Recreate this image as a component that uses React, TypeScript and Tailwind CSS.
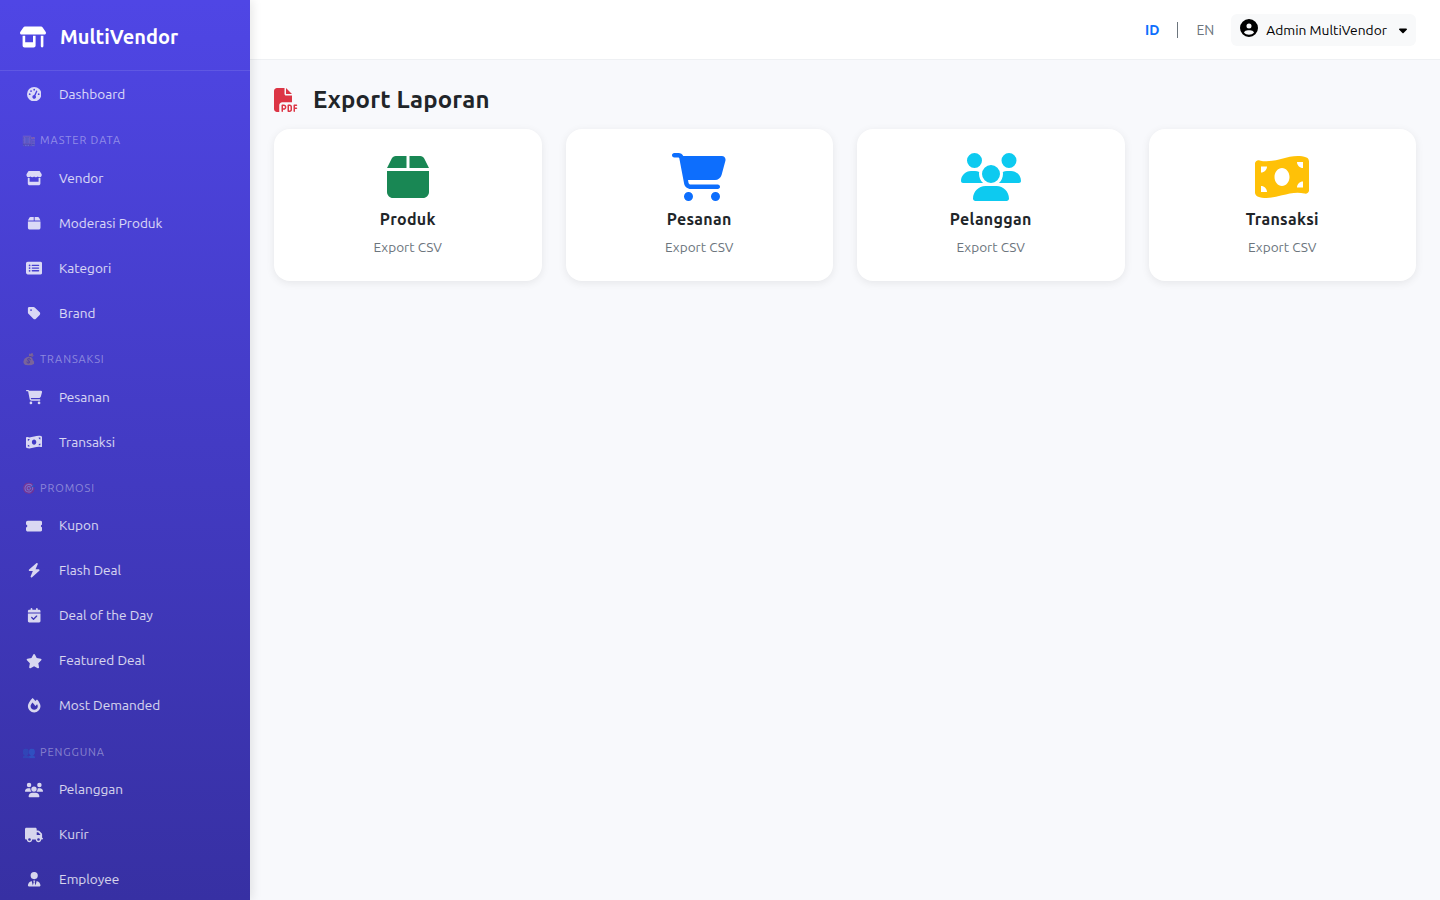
import type { IconType } from "react-icons";
import { FaFireAlt } from "react-icons/fa";
import {
  FaBolt,
  FaBox,
  FaCalendarCheck,
  FaCaretDown,
  FaCartShopping,
  FaCircleUser,
  FaFilePdf,
  FaGaugeHigh,
  FaMoneyBillWave,
  FaRectangleList,
  FaShop,
  FaStar,
  FaStore,
  FaTag,
  FaTicketSimple,
  FaTruck,
  FaUserTie,
  FaUsers,
} from "react-icons/fa6";

type NavItem = { label: string; icon: IconType; size: string };
type NavGroup = { title?: string; emoji?: string; items: NavItem[] };

const groups: NavGroup[] = [
  { items: [{ label: "Dashboard", icon: FaGaugeHigh, size: "text-[14.4px]" }] },
  {
    title: "MASTER DATA",
    emoji: "🏬",
    items: [
      { label: "Vendor", icon: FaStore, size: "text-[16.2px]" },
      { label: "Moderasi Produk", icon: FaBox, size: "text-[14.4px]" },
      { label: "Kategori", icon: FaRectangleList, size: "text-[16.2px]" },
      { label: "Brand", icon: FaTag, size: "text-[14.4px]" },
    ],
  },
  {
    title: "TRANSAKSI",
    emoji: "💰",
    items: [
      { label: "Pesanan", icon: FaCartShopping, size: "text-[16.2px]" },
      { label: "Transaksi", icon: FaMoneyBillWave, size: "text-[16.2px]" },
    ],
  },
  {
    title: "PROMOSI",
    emoji: "🎯",
    items: [
      { label: "Kupon", icon: FaTicketSimple, size: "text-[16.2px]" },
      { label: "Flash Deal", icon: FaBolt, size: "text-[14.4px]" },
      { label: "Deal of the Day", icon: FaCalendarCheck, size: "text-[14.4px]" },
      { label: "Featured Deal", icon: FaStar, size: "text-[16.2px]" },
      { label: "Most Demanded", icon: FaFireAlt, size: "text-[14.4px]" },
    ],
  },
  {
    title: "PENGGUNA",
    emoji: "👥",
    items: [
      { label: "Pelanggan", icon: FaUsers, size: "text-[18px]" },
      { label: "Kurir", icon: FaTruck, size: "text-[18px]" },
      { label: "Employee", icon: FaUserTie, size: "text-[14.4px]" },
    ],
  },
];

const cards = [
  { label: "Produk", icon: FaBox, size: "text-[48px]", color: "text-[#198754]" },
  { label: "Pesanan", icon: FaCartShopping, size: "text-[54px]", color: "text-[#0d6efd]" },
  { label: "Pelanggan", icon: FaUsers, size: "text-[60px]", color: "text-[#0dcaf0]" },
  { label: "Transaksi", icon: FaMoneyBillWave, size: "text-[54px]", color: "text-[#ffc107]" },
];

function Sidebar() {
  return (
    <aside className="relative z-10 flex h-screen w-[250px] shrink-0 flex-col overflow-hidden bg-gradient-to-b from-[#4f46e5] to-[#3730a3] shadow-[2px_0_10px_rgba(0,0,0,0.1)]">
      <div className="flex h-[71px] shrink-0 items-center gap-[14px] border-b border-white/10 pl-5 pt-1">
        <FaShop className="text-[26px] text-white" />
        <span className="text-[20px] font-bold text-white">MultiVendor</span>
      </div>
      <nav className="pt-[0.5px]">
        {groups.map((group, i) => (
          <div key={i}>
            {group.title && (
              <div className="flex h-[38.9px] items-center gap-[6px] pl-[22px] pt-[9px] text-[11px] tracking-[0.9px] text-white/40">
                <span className="w-3 opacity-70">{group.emoji}</span>
                {group.title}
              </div>
            )}
            {group.items.map((item) => (
              <a key={item.label} className="flex h-[45px] items-center pl-6 text-[13.6px] text-white/80">
                <span className="flex w-5 justify-center">
                  <item.icon className={item.size} />
                </span>
                <span className="ml-[15px]">{item.label}</span>
              </a>
            ))}
          </div>
        ))}
      </nav>
    </aside>
  );
}

export default function App() {
  return (
    <div className="flex h-screen overflow-hidden bg-[#f8f9fc] font-['Ubuntu','Noto_Sans',sans-serif] text-[#212529]">
      <Sidebar />
      <div className="flex min-w-0 flex-1 flex-col">
        <header className="flex h-[60px] shrink-0 items-center justify-end border-b border-[#eef0f3] bg-white pr-6">
          <span className="mt-px text-[14px] font-bold text-[#0d6efd]">ID</span>
          <span className="ml-[18px] mt-px h-4 w-px bg-[#6c757d]" />
          <span className="ml-[18px] mt-px text-[14px] text-[#6c757d]">EN</span>
          <button className="ml-[17px] flex h-[32px] items-center rounded-md bg-[#f8f9fa] px-[9px] text-[13.8px] text-black">
            <FaCircleUser className="-mt-1 text-[18px]" />
            <span className="ml-2 mt-px">Admin MultiVendor</span>
            <FaCaretDown className="ml-3 h-[14px] w-2" />
          </button>
        </header>
        <main className="px-6 pt-6">
          <h1 className="flex h-[32px] items-center gap-[15px] text-[24px] font-bold leading-none tracking-[0.15px]">
            <FaFilePdf className="text-[24px] text-[#dc3545]" />
            Export Laporan
          </h1>
          <div className="mt-[13px] grid grid-cols-4 gap-6">
            {cards.map((card) => (
              <div
                key={card.label}
                className="flex h-[152px] flex-col items-center rounded-2xl bg-white shadow-[0_2px_8px_rgba(0,0,0,0.08)]"
              >
                <div className="mt-6 flex h-[48px] items-center">
                  <card.icon className={`${card.size} ${card.color}`} />
                </div>
                <div className="mt-[6px] text-[16px] font-bold tracking-[0.3px]">{card.label}</div>
                <div className="mt-[6px] text-[13.6px] text-[#6c757d]">Export CSV</div>
              </div>
            ))}
          </div>
        </main>
      </div>
    </div>
  );
}
